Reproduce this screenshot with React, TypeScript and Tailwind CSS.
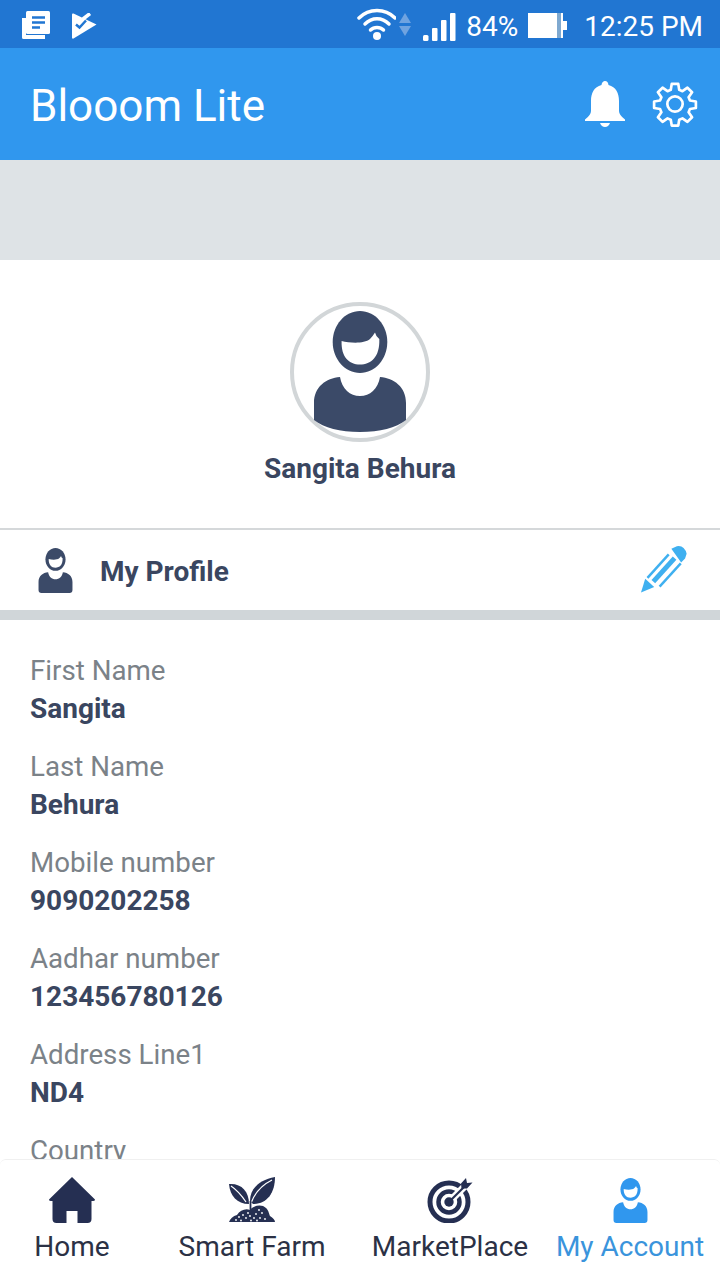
import { ReactNode } from 'react';

const fields = [
  { label: 'First Name', value: 'Sangita' },
  { label: 'Last Name', value: 'Behura' },
  { label: 'Mobile number', value: '9090202258' },
  { label: 'Aadhar number', value: '123456780126' },
  { label: 'Address Line1', value: 'ND4' },
  { label: 'Country', value: 'India' },
];

function NewsIcon() {
  return (
    <svg viewBox="0 0 28 28" className="mt-[2px] h-[28px] w-[28px]">
      <path d="M0 7h4v17h19v4H1.500Q0 28 0 26.500Z" fill="#fff" />
      <rect x="4" y="0" width="24" height="23" rx="1.500" fill="#fff" />
      <path d="M10 6.500h13M10 11.500h13M10 16.500h8" stroke="#2176d2" strokeWidth="2.500" fill="none" />
    </svg>
  );
}

function FlagCheckIcon() {
  return (
    <svg viewBox="0 0 25 26" className="mt-[3px] h-[26px] w-[25px]">
      <path d="M0 1.500Q0 0 1.500 .500L24.500 11.500 1.500 25.500Q0 26 0 24.500Z" fill="#fff" />
      <path d="M11 6L18 .5" stroke="#fff" strokeWidth="3.500" fill="none" />
      <path d="M4 11.500L7.500 14.500 14 7.500" stroke="#2176d2" strokeWidth="2.500" fill="none" />
    </svg>
  );
}

function WifiIcon() {
  return (
    <svg viewBox="0 0 40 32" className="h-[32px] w-[40px]">
      <g fill="none" stroke="#fff" strokeWidth="3.500" strokeLinecap="round">
        <path d="M3 10C13 0 29 0 39 10" />
        <path d="M9 16C16 9 26 9 33 16" />
        <path d="M14.500 22C18 18.500 24 18.500 27.500 22" />
      </g>
      <circle cx="21" cy="28" r="4" fill="#fff" />
    </svg>
  );
}

function SignalIcon() {
  return (
    <svg viewBox="0 0 33 28" className="h-[28px] w-[33px]" fill="#fff">
      <rect x="0" y="22" width="5.500" height="6" rx="1.500" />
      <rect x="9" y="15" width="5.500" height="13" rx="1" />
      <rect x="18" y="7" width="5.500" height="21" rx="1" />
      <rect x="27" y="0" width="5.500" height="28" rx="1" />
    </svg>
  );
}

// body is shared by the avatar, the profile row and the nav tab
function PersonIcon({ color, className, flatBase = false }: { color: string; className: string; flatBase?: boolean }) {
  return (
    <svg viewBox="0 0 92 122" className={className}>
      <path
        d="M46 0C61 0 73.300 14 73.300 31S61 62 46 62 18.700 48 18.700 31 31 0 46 0Z"
        fill={color}
      />
      <path d="M27.600 30C36 32 50 33 56 28Q59 25 61 21.600Q62 26 65.300 28C66 46 57 53.500 46 53.500S27 46 27.600 30Z" fill="#fff" />
      <path
        d={
          flatBase
            ? 'M26 66C28 78 36 85 46 85S64 78 66 66C80 67 92 76 92 92V109C82 117 66 121 46 121S10 117 0 109V92C0 76 12 67 26 66Z'
            : 'M26 66C28 78 36 85 46 85S64 78 66 66C80 67 92 76 92 92V114Q92 122 84 122H8Q0 122 0 114V92C0 76 12 67 26 66Z'
        }
        fill={color}
      />
    </svg>
  );
}

function PencilIcon() {
  return (
    <svg viewBox="0 0 48 48" className="-mt-[2px] h-[48px] w-[47px]">
      <path d="M0 48L4.300 34 13.500 42.500Z" fill="#3fb0f0" />
      <g stroke="#3fb0f0" fill="none">
        <path d="M6.600 33L28.300 9" strokeWidth="2.500" />
        <path d="M12.600 37L34.300 13" strokeWidth="5" />
        <path d="M19 42L40.600 18.300" strokeWidth="2.500" />
      </g>
      <path d="M31 3.300L36.600 .7Q41 0 43.500 2.500T46.600 8.300L45 13.300 41 17.300Z" fill="#3fb0f0" />
    </svg>
  );
}

function HomeIcon() {
  return (
    <svg viewBox="0 0 46 46" className="h-[46px] w-[46px]" fill="#252f52">
      <path d="M23 0L46 22.500Q46 24 44 24H42.500V42Q42.500 46 38.500 46H28.500V34H17.500V46H7.500Q3.500 46 3.500 42V24H2Q0 24 0 22.500Z" />
    </svg>
  );
}

function PlantIcon() {
  return (
    <svg viewBox="0 0 46 46" className="h-[46px] w-[46px]">
      <path d="M21 24C21 12 30 3 46 0 46 16 38 27 24 27Z" fill="#252f52" />
      <path d="M0 7C12 6 20 14 20 27 8 27 1 19 0 7Z" fill="#252f52" />
      <path d="M22.500 25C26 16 33 8 43 3" stroke="#fff" strokeWidth="1.200" fill="none" />
      <path d="M17 25C13 19 8 13 2 9" stroke="#fff" strokeWidth="1.200" fill="none" />
      <path d="M21.500 24V34" stroke="#252f52" strokeWidth="1.800" fill="none" />
      <path d="M0 45C1 42 4 39 8 38 11 33 17 31 21 33 25 28 33 27 37 31 40 34 40 37 41 39 44 41 46 43 46 45Z" fill="#252f52" />
      <g fill="#fff">
        <circle cx="7" cy="43" r=".9" />
        <circle cx="10" cy="40" r=".9" />
        <circle cx="12" cy="43.500" r=".9" />
        <circle cx="14" cy="38" r=".9" />
        <circle cx="17" cy="41" r=".9" />
        <circle cx="19" cy="36" r=".9" />
        <circle cx="21" cy="39" r=".9" />
        <circle cx="22" cy="43.500" r=".9" />
        <circle cx="25" cy="41" r=".9" />
        <circle cx="27" cy="37" r=".9" />
        <circle cx="28" cy="43.500" r=".9" />
        <circle cx="31" cy="41" r=".9" />
        <circle cx="33" cy="36" r=".9" />
        <circle cx="36" cy="42" r=".9" />
        <circle cx="30" cy="33" r=".9" />
      </g>
    </svg>
  );
}

function TargetIcon() {
  return (
    <svg viewBox="0 0 46 46" className="h-[46px] w-[46px]">
      <g fill="none" stroke="#252f52">
        <circle cx="22" cy="25" r="19" strokeWidth="5" />
        <circle cx="22" cy="25" r="10.500" strokeWidth="4.500" />
      </g>
      <path d="M22 25L39 8" stroke="#fff" strokeWidth="7" />
      <circle cx="22" cy="25" r="4.700" fill="#252f52" />
      <path d="M22 25L38 9" stroke="#252f52" strokeWidth="2.200" />
      <path d="M34 6.500L39 1 40 6 45.500 5.500 40 11.500H34.500Z" fill="#252f52" />
    </svg>
  );
}

function NavTab({ icon, label, active, className }: { icon: ReactNode; label: string; active?: boolean; className: string }) {
  return (
    <div className={`flex flex-col items-center ${className}`}>
      <div className="flex h-[46px] items-center justify-center">{icon}</div>
      <span className={`mt-[5px] text-[28px] leading-[38px] whitespace-nowrap ${active ? 'text-[#3a94dc]' : 'text-[#2b3145]'}`}>
        {label}
      </span>
    </div>
  );
}

export default function App() {
  return (
    <div className="flex h-[1280px] w-[720px] flex-col overflow-hidden bg-white font-['Roboto',sans-serif]">
      {/* Status bar */}
      <div className="flex h-[48px] shrink-0 items-center bg-[#2176d2] pl-[22px] pr-[17px] text-white">
        <NewsIcon />
        <div className="ml-[22px]">
          <FlagCheckIcon />
        </div>
        <div className="ml-auto">
          <WifiIcon />
        </div>
        <div className="ml-[3px] flex flex-col gap-[3px]">
          <div className="h-0 w-0 border-x-[6px] border-b-[10px] border-x-transparent border-b-[#6fa3e0]" />
          <div className="h-0 w-0 border-x-[6px] border-t-[10px] border-x-transparent border-t-[#6fa3e0]" />
        </div>
        <div className="ml-[12px] mt-[6px]">
          <SignalIcon />
        </div>
        <span className="ml-[10px] mt-[5px] text-[28px] leading-none">84%</span>
        <div className="ml-[10px] mt-[2px] flex items-center">
          <div className="flex h-[25px] w-[35px] justify-end bg-white pr-[2px]">
            <div className="h-full w-[4px] bg-[#7fa9d0]" />
          </div>
          <div className="h-[9px] w-[4px] bg-white" />
        </div>
        <span className="ml-[17px] mt-[5px] text-[28px] leading-none">12:25 PM</span>
      </div>

      {/* App bar */}
      <div className="flex h-[112px] shrink-0 items-center bg-[#3097ee] pl-[30px] pr-[22px] text-white">
        <span className="mt-[4px] text-[44px] leading-none">Blooom Lite</span>
        <svg viewBox="0 0 40 46" className="ml-auto h-[46px] w-[40px]" fill="#fff">
          <path d="M20 0Q23 0 23.500 4C31 6 34 12 34 20V30Q34 34 40 38.500V40H0V38.500Q6 34 6 30V20C6 12 9 6 16.500 4 17 0 20 0 20 0Z" />
          <path d="M15 42H25Q23.500 46 20 46T15 42Z" />
        </svg>
        <svg viewBox="0 0 24 24" className="ml-[27px] h-[46px] w-[46px]" fill="none" stroke="#fff" strokeWidth="1.400" strokeLinejoin="round">
          <path d="M10.300 1.500h3.400l.5 3.100 1.700.7 2.600-1.800 2.400 2.400-1.800 2.600.7 1.700 3.100.5v3.400l-3.100.5-.7 1.700 1.800 2.600-2.400 2.400-2.600-1.800-1.700.7-.5 3.100h-3.400l-.5-3.100-1.700-.7-2.600 1.800-2.400-2.400 1.800-2.600-.7-1.700-3.100-.5v-3.400l3.100-.5.7-1.700-1.800-2.600 2.400-2.400 2.600 1.800 1.700-.7z" />
          <circle cx="12" cy="12" r="4" />
        </svg>
      </div>

      <div className="h-[100px] shrink-0 bg-[#dee3e6]" />

      {/* Avatar */}
      <div className="flex h-[268px] shrink-0 flex-col items-center pt-[42px]">
        <div className="box-border flex h-[140px] w-[140px] justify-center rounded-full border-4 border-[#d2d6d8] pt-[5px]">
          <PersonIcon color="#3b4a68" flatBase className="h-[122px] w-[92px]" />
        </div>
        <span className="mt-[10px] text-[28px] font-bold leading-[34px] text-[#3a4660]">Sangita Behura</span>
      </div>

      {/* My Profile row */}
      <div className="flex h-[82px] shrink-0 items-center border-t-2 border-[#d5d8da] pl-[38px] pr-[32px]">
        <PersonIcon color="#3b4a68" className="h-[45px] w-[35px]" />
        <span className="ml-[27px] mt-[4px] text-[28px] font-bold leading-none text-[#3a4660]">My Profile</span>
        <div className="ml-auto">
          <PencilIcon />
        </div>
      </div>
      <div className="h-[10px] shrink-0 bg-[#d0d6d9]" />

      {/* Fields */}
      <div className="min-h-0 flex-1 overflow-hidden px-[30px] pt-[32px]">
        {fields.map((field) => (
          <div key={field.label} className="mb-[20px]">
            <div className="text-[27.7px] leading-[38px] text-[#7b8288]">{field.label}</div>
            <div className="text-[28px] font-bold leading-[38px] text-[#3a4660]">{field.value}</div>
          </div>
        ))}
      </div>

      {/* Bottom nav */}
      <div className="flex h-[121px] shrink-0 rounded-t-[6px] border-t border-[#f0f0f0] bg-white pt-[17px]">
        <NavTab className="w-[144px]" icon={<HomeIcon />} label="Home" />
        <NavTab className="w-[216px]" icon={<PlantIcon />} label="Smart Farm" />
        <NavTab className="w-[180px]" icon={<TargetIcon />} label="MarketPlace" />
        <NavTab className="w-[180px]" icon={<PersonIcon color="#3097ee" className="h-[45px] w-[35px]" />} label="My Account" active />
      </div>
    </div>
  );
}
